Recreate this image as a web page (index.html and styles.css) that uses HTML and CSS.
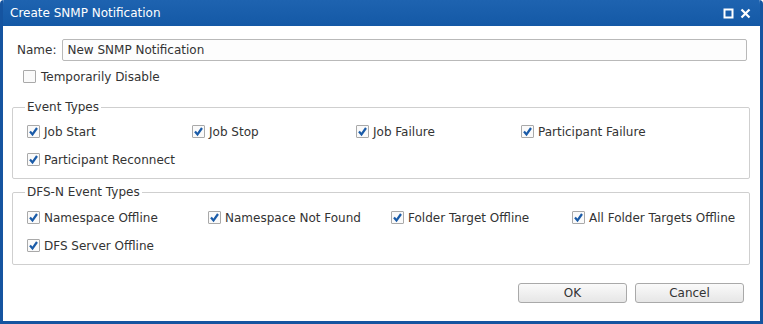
FILE: index.html
```html
<!DOCTYPE html>
<html>
<head>
    <link rel="stylesheet" href="styles.css">
</head>
<body>
    <div class="window">
        <div class="titlebar">
            <span class="title">Create SNMP Notification</span>
            <span class="title-icons">
                <svg width="11" height="11" viewBox="0 0 11 11"><rect x="1.5" y="1.5" width="8" height="8" fill="none" stroke="#fff" stroke-width="2"/></svg>
                <svg width="11" height="11" viewBox="0 0 11 11"><path d="M1.5 1.5 L9.5 9.5 M9.5 1.5 L1.5 9.5" stroke="#fff" stroke-width="2.2"/></svg>
            </span>
        </div>
        <div class="content">
            <div class="name-row">
                <label>Name:</label>
                <input class="name-input" type="text" value="New SNMP Notification">
            </div>
            <div class="disable-row">
                <span class="box"></span>
                <span>Temporarily Disable</span>
            </div>

            <fieldset class="group">
                <legend>Event Types</legend>
                <div class="options events">
                    <div class="opt"><span class="box"><svg class="tick" viewBox="0 0 11 11"><path d="M2 5.5 L4.5 8.5 L9 2"/></svg></span>Job Start</div>
                    <div class="opt"><span class="box"><svg class="tick" viewBox="0 0 11 11"><path d="M2 5.5 L4.5 8.5 L9 2"/></svg></span>Job Stop</div>
                    <div class="opt"><span class="box"><svg class="tick" viewBox="0 0 11 11"><path d="M2 5.5 L4.5 8.5 L9 2"/></svg></span>Job Failure</div>
                    <div class="opt"><span class="box"><svg class="tick" viewBox="0 0 11 11"><path d="M2 5.5 L4.5 8.5 L9 2"/></svg></span>Participant Failure</div>
                    <div class="opt"><span class="box"><svg class="tick" viewBox="0 0 11 11"><path d="M2 5.5 L4.5 8.5 L9 2"/></svg></span>Participant Reconnect</div>
                </div>
            </fieldset>

            <fieldset class="group dfs-group">
                <legend>DFS-N Event Types</legend>
                <div class="options dfs">
                    <div class="opt"><span class="box"><svg class="tick" viewBox="0 0 11 11"><path d="M2 5.5 L4.5 8.5 L9 2"/></svg></span>Namespace Offline</div>
                    <div class="opt"><span class="box"><svg class="tick" viewBox="0 0 11 11"><path d="M2 5.5 L4.5 8.5 L9 2"/></svg></span>Namespace Not Found</div>
                    <div class="opt"><span class="box"><svg class="tick" viewBox="0 0 11 11"><path d="M2 5.5 L4.5 8.5 L9 2"/></svg></span>Folder Target Offline</div>
                    <div class="opt"><span class="box"><svg class="tick" viewBox="0 0 11 11"><path d="M2 5.5 L4.5 8.5 L9 2"/></svg></span>All Folder Targets Offline</div>
                    <div class="opt"><span class="box"><svg class="tick" viewBox="0 0 11 11"><path d="M2 5.5 L4.5 8.5 L9 2"/></svg></span>DFS Server Offline</div>
                </div>
            </fieldset>

            <div class="buttons">
                <button class="btn">OK</button>
                <button class="btn">Cancel</button>
            </div>
        </div>
    </div>
</body>
</html>
```

FILE: styles.css
```css
html, body {
    margin: 0;
    padding: 0;
    background: #fff;
}
body {
    font-family: "DejaVu Sans", Verdana, sans-serif;
    font-size: 12px;
    color: #333;
}
.window {
    width: 763px;
    height: 324px;
    box-sizing: border-box;
    border: 3px solid #1554a0;
    border-top: none;
    border-radius: 4px 4px 0 0;
    background: #fff;
    overflow: hidden;
}
.titlebar {
    height: 26px;
    margin: 0 -3px;
    padding: 0 12px 0 10px;
    background: linear-gradient(#1e63b0, #1459a6);
    color: #fff;
    display: flex;
    align-items: center;
    justify-content: space-between;
    border-radius: 4px 4px 0 0;
}
.title {
    font-size: 12px;
}
.title-icons {
    display: flex;
    gap: 6px;
}
.content {
    padding: 13px 10px 0 9px;
}
.name-row {
    display: flex;
    align-items: center;
    gap: 6px;
    padding: 0 3px 0 5px;
}
.name-input {
    flex: 1;
    height: 22px;
    box-sizing: border-box;
    border: 1px solid #b9b9b9;
    border-radius: 2px;
    font-family: inherit;
    font-size: 12px;
    color: #333;
    padding: 0 4px;
    background: #fdfdfd;
}
.disable-row {
    display: flex;
    align-items: center;
    gap: 5px;
    height: 17px;
    margin: 7px 0 0 11px;
}
.box {
    width: 13px;
    height: 13px;
    box-sizing: border-box;
    border: 1px solid #a9a9a9;
    border-radius: 1px;
    background: #fafafa;
    display: inline-flex;
    align-items: center;
    justify-content: center;
    flex: none;
}
.tick {
    width: 11px;
    height: 11px;
    fill: none;
    stroke: #1a5ba8;
    stroke-width: 2.2;
}
.group {
    margin: 15px 0 0 0;
    padding: 9px 0 10px 14px;
    border: 1px solid #cfcfcf;
    border-radius: 2px;
}
.dfs-group {
    margin-top: 6px;
    padding-top: 10px;
}
legend {
    padding: 0 2px;
    margin-left: -2px;
}
.options {
    display: grid;
    row-gap: 11px;
}
.events {
    grid-template-columns: 165px 164px 165px auto;
}
.dfs {
    grid-template-columns: 181px 183px 181px auto;
}
.opt {
    display: flex;
    align-items: center;
    gap: 4px;
    height: 17px;
}
.buttons {
    display: flex;
    justify-content: flex-end;
    gap: 8px;
    margin: 18px 6px 0 0;
}
.btn {
    width: 109px;
    height: 20px;
    border: 1px solid #a9a9a9;
    border-radius: 3px;
    background: linear-gradient(#fafafa, #e6e6e6);
    font-family: inherit;
    font-size: 12px;
    color: #333;
}
```
